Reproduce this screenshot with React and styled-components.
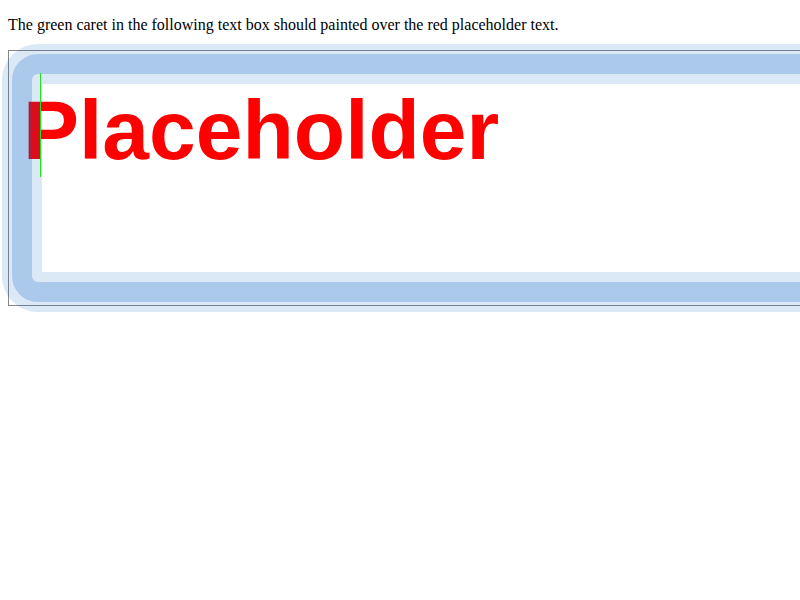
import React from "react";
import styled, { createGlobalStyle } from "styled-components";

const Global = createGlobalStyle`
  html, body {
    margin: 0;
    padding: 0;
    background: #ffffff;
  }
  body {
    font-family: "Liberation Serif", "Times New Roman", serif;
    font-size: 16px;
    color: #000000;
  }
`;

const Page = styled.div`
  width: 800px;
  height: 600px;
  box-sizing: border-box;
  padding: 0 0 0 8px;
  overflow: hidden;
  display: flow-root;
`;

const Note = styled.p`
  margin: 16px 0;
  line-height: normal;
  white-space: nowrap;
`;

const TextBox = styled.div`
  position: relative;
  box-sizing: border-box;
  width: 1000px;
  height: 256px;
  border: 1px solid #868686;
  padding: 31px 0 0 14px;
  background: #ffffff;
`;

const Placeholder = styled.div`
  font-family: "Liberation Sans", Arial, sans-serif;
  font-weight: bold;
  font-size: 84px;
  line-height: normal;
  color: #ff0000;
  white-space: nowrap;
`;

const Ring = styled.div`
  position: absolute;
  inset: -7px;
  box-sizing: border-box;
  border: ${(p) => p.$width}px solid ${(p) => p.$color};
  border-radius: ${(p) => p.$radius}px;
  pointer-events: none;
`;

const RingInner = styled.div`
  box-sizing: border-box;
  height: 100%;
  border: ${(p) => p.$width}px solid ${(p) => p.$color};
  border-radius: ${(p) => p.$radius}px;
`;

const Caret = styled.div`
  position: absolute;
  left: 31px;
  top: 22px;
  width: 1px;
  height: 104px;
  background: #1ee61e;
`;

const LIGHT = "rgba(0, 90, 190, 0.14)";
const DARK = "rgba(0, 90, 190, 0.33)";

export default function App() {
  return (
    <Page>
      <Global />
      <Note>
        The green caret in the following text box should painted over the red
        placeholder text.
      </Note>
      <TextBox>
        <Placeholder>Placeholder</Placeholder>
        <Ring $width={10} $color={LIGHT} $radius={36}>
          <RingInner $width={20} $color={DARK} $radius={26}>
            <RingInner $width={10} $color={LIGHT} $radius={6} />
          </RingInner>
        </Ring>
        <Caret />
      </TextBox>
    </Page>
  );
}
